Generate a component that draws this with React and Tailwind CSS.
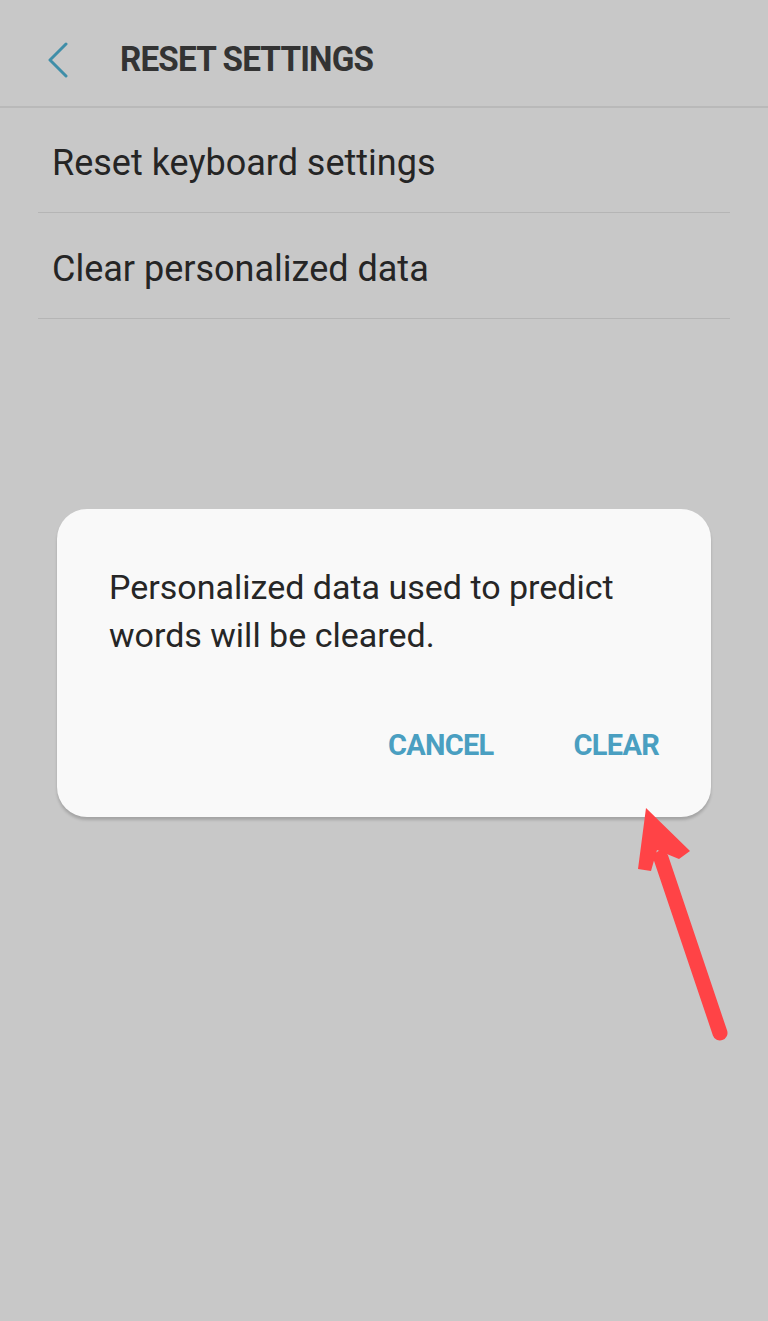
import React from "react";

const App = () => {
  return (
    <div className="relative h-[1321px] w-[768px] overflow-hidden bg-[#c8c8c8] font-['Roboto',sans-serif]">
      {/* header */}
      <div className="flex h-[108px] items-center border-b-2 border-[#b9b9b9] pt-[14px]">
        <div className="ml-[46px] flex h-[40px] w-[26px] items-center">
          <svg width="24" height="36" viewBox="0 0 24 36" fill="none">
            <path d="M20 2 L4 18 L20 34" stroke="#3f8ea8" strokeWidth="3" strokeLinecap="round" strokeLinejoin="round" />
          </svg>
        </div>
        <h1 className="ml-[48px] origin-left scale-x-[0.95] text-[35px] font-bold tracking-tight text-[#333333]">
          RESET SETTINGS
        </h1>
      </div>

      {/* list */}
      <div className="px-[38px]">
        <div className="flex h-[105px] items-center border-b border-[#b5b5b5] pl-[14px] pt-[6px]">
          <span className="text-[36px] text-[#252525]">Reset keyboard settings</span>
        </div>
        <div className="flex h-[106px] items-center border-b border-[#b5b5b5] pl-[14px] pt-[6px]">
          <span className="text-[36px] text-[#252525]">Clear personalized data</span>
        </div>
      </div>

      {/* dialog */}
      <div className="mx-[57px] mt-[190px] h-[308px] rounded-[30px] bg-[#f9f9f9] shadow-[0_3px_3px_rgba(0,0,0,0.18)]">
        <p className="pl-[52px] pt-[54px] text-[34px] leading-[48px] text-[#262626]">
          Personalized data used to predict
          <br />
          words will be cleared.
        </p>
        <div className="mt-[72px] flex justify-end gap-[80px] pr-[52px]">
          <button className="text-[29px] font-bold leading-none tracking-tight text-[#4a9fc1]">
            CANCEL
          </button>
          <button className="text-[29px] font-bold leading-none tracking-tight text-[#4a9fc1]">
            CLEAR
          </button>
        </div>
      </div>

      {/* annotation arrow */}
      <svg className="absolute left-0 top-0" width="768" height="1321" viewBox="0 0 768 1321">
        <line x1="720" y1="1033" x2="661" y2="858" stroke="#ff4346" strokeWidth="15" strokeLinecap="round" />
        <polygon points="646,808 638,869 651,871 657,850 679,859 690,851" fill="#ff4346" />
      </svg>
    </div>
  );
};

export default App;
